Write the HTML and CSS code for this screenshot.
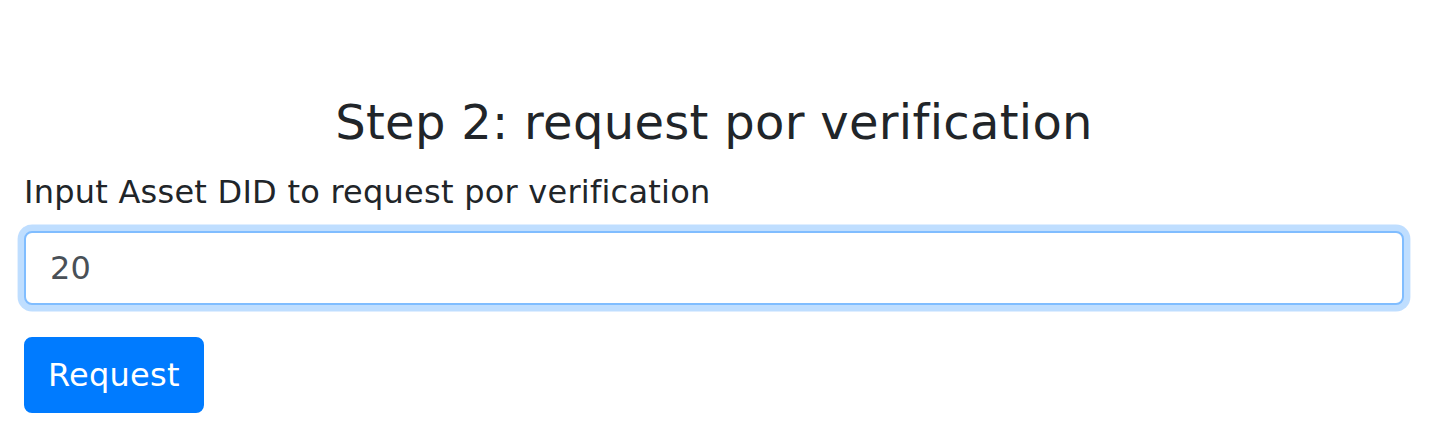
FILE: index.html
```html
<!DOCTYPE html>
<html lang="en">
<head>
<meta charset="utf-8">
<title>Step 2</title>
<link rel="stylesheet" href="styles.css">
</head>
<body>
<div class="container">
  <h4 class="title">Step 2: request por verification</h4>
  <form class="form" onsubmit="return false">
    <div class="form-group">
      <label class="label" for="did">Input Asset DID to request por verification</label>
      <input class="input" id="did" type="text" value="20">
    </div>
    <button class="btn" type="button">Request</button>
  </form>
</div>
</body>
</html>
```

FILE: styles.css
```css
* { box-sizing: border-box; }
html, body {
  margin: 0;
  background: #fff;
}
body {
  font-family: "DejaVu Sans", Verdana, sans-serif;
  font-size: 32px;
  line-height: 1.5;
  color: #212529;
  letter-spacing: 0.24px;
}
.container {
  padding: 94px 44px 0 24px;
}
.title {
  margin: 0 0 16px;
  font-size: 48px;
  font-weight: 400;
  line-height: 1.2;
  text-align: center;
  letter-spacing: 0.3px;
}
.form {
  display: flex;
  flex-direction: column;
  align-items: flex-start;
}
.form-group {
  width: 100%;
  margin-bottom: 32px;
}
.label {
  display: block;
  margin-bottom: 15px;
}
.input {
  display: block;
  width: 100%;
  height: 74px;
  padding: 0 24px;
  font-family: inherit;
  font-size: 32px;
  letter-spacing: 0.24px;
  color: #495057;
  background: #fff;
  border: 2px solid #80bdff;
  border-radius: 8px;
  outline: none;
  box-shadow: 0 0 0 6.4px rgba(0, 123, 255, 0.25);
}
.btn {
  font-family: inherit;
  font-size: 32px;
  letter-spacing: 0.24px;
  line-height: 48px;
  padding: 12px 22px;
  color: #fff;
  background: #007bff;
  border: 2px solid #007bff;
  border-radius: 8px;
  cursor: pointer;
}
```
